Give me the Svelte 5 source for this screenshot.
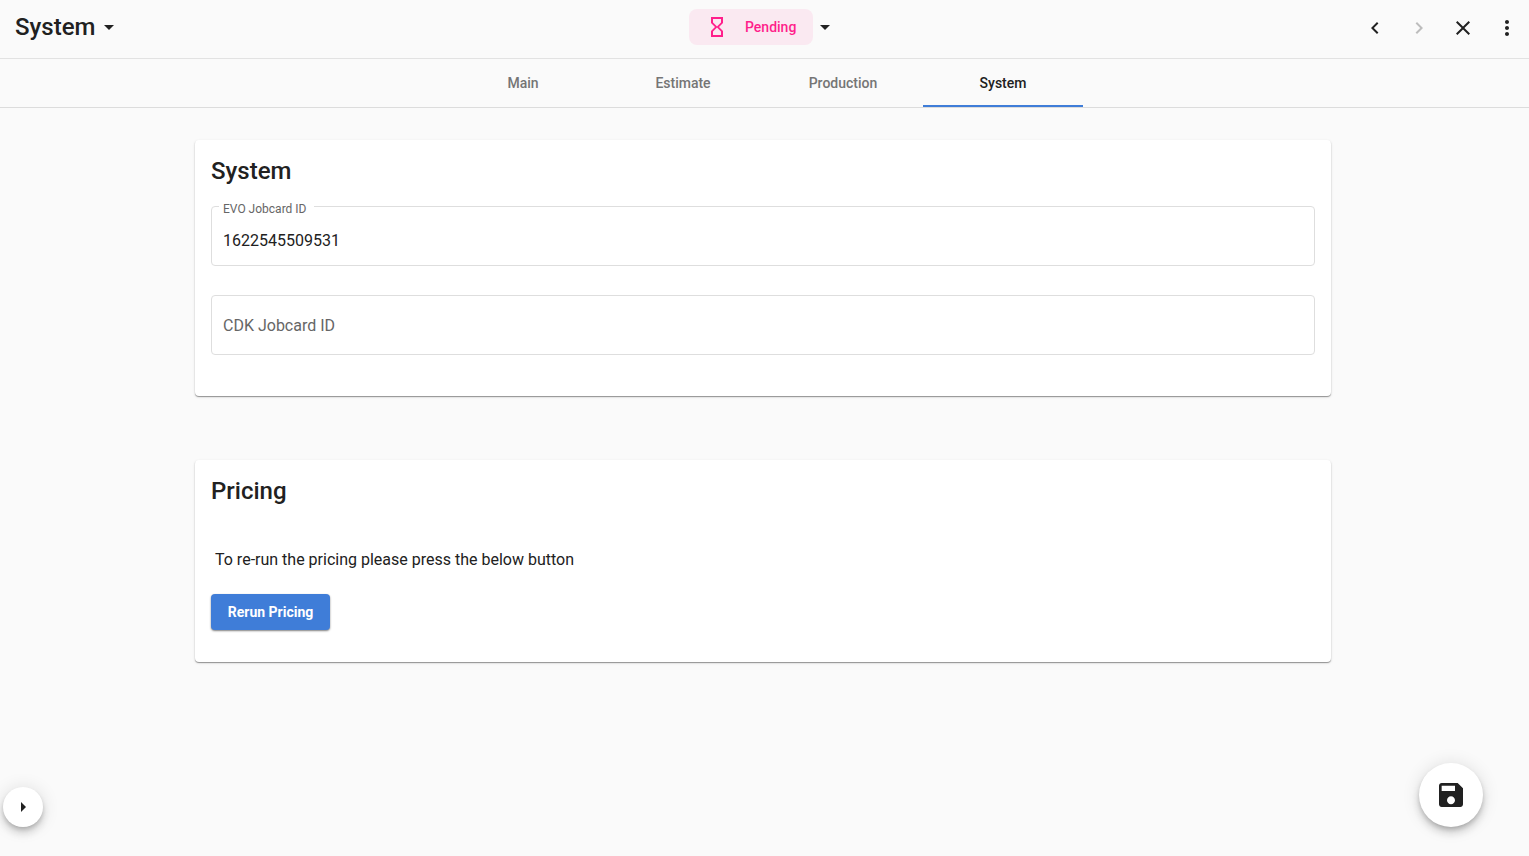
<script>
  const tabs = ['Main', 'Estimate', 'Production', 'System'];
  let active = $state('System');
  let evoId = $state('1622545509531');
  let cdkId = $state('');
</script>

<div class="page">
  <header class="toolbar">
    <button class="title">
      System
      <svg viewBox="0 0 24 24" aria-hidden="true"><path d="M7 10l5 5 5-5z" /></svg>
    </button>

    <div class="status">
      <button class="pill">
        <svg viewBox="0 0 24 24" aria-hidden="true"><path d="M6 2v6h.01L6 8.01 10 12l-4 4 .01.01H6V22h12v-5.99h-.01L18 16l-4-4 4-3.99-.01-.01H18V2H6zm10 14.5V20H8v-3.5l4-4 4 4zm-4-5l-4-4V4h8v3.5l-4 4z" /></svg>
        Pending
      </button>
      <button class="caret" aria-label="Change status">
        <svg viewBox="0 0 24 24"><path d="M7 10l5 5 5-5z" /></svg>
      </button>
    </div>

    <nav class="actions">
      <button aria-label="Previous"><svg viewBox="0 0 24 24"><path d="M15.41 7.41L14 6l-6 6 6 6 1.41-1.41L10.83 12z" /></svg></button>
      <button aria-label="Next" disabled><svg viewBox="0 0 24 24"><path d="M10 6L8.59 7.41 13.17 12l-4.58 4.59L10 18l6-6z" /></svg></button>
      <button aria-label="Close"><svg viewBox="0 0 24 24"><path d="M19 6.41L17.59 5 12 10.59 6.41 5 5 6.41 10.59 12 5 17.59 6.41 19 12 13.41 17.59 19 19 17.59 13.41 12z" /></svg></button>
      <button aria-label="More"><svg viewBox="0 0 24 24"><path d="M12 8c1.1 0 2-.9 2-2s-.9-2-2-2-2 .9-2 2 .9 2 2 2zm0 2c-1.1 0-2 .9-2 2s.9 2 2 2 2-.9 2-2-.9-2-2-2zm0 6c-1.1 0-2 .9-2 2s.9 2 2 2 2-.9 2-2-.9-2-2-2z" /></svg></button>
    </nav>
  </header>

  <div class="tabs" role="tablist">
    {#each tabs as tab}
      <button role="tab" aria-selected={active === tab} class:active={active === tab} onclick={() => (active = tab)}>{tab}</button>
    {/each}
  </div>

  <main>
    <section class="card fields">
      <h2>System</h2>
      <div class="field">
        <input id="evo" type="text" bind:value={evoId} />
        <label for="evo" class:floating={evoId}>EVO Jobcard ID</label>
      </div>
      <div class="field">
        <input id="cdk" type="text" bind:value={cdkId} />
        <label for="cdk" class:floating={cdkId}>CDK Jobcard ID</label>
      </div>
    </section>

    <section class="card pricing">
      <h2>Pricing</h2>
      <p>To re-run the pricing please press the below button</p>
      <button class="primary">Rerun Pricing</button>
    </section>
  </main>

  <button class="fab small" aria-label="Open panel">
    <svg viewBox="0 0 24 24"><path d="M10 17l5-5-5-5z" /></svg>
  </button>
  <button class="fab large" aria-label="Save">
    <svg viewBox="0 0 24 24"><path d="M17 3H5c-1.11 0-2 .9-2 2v14c0 1.1.89 2 2 2h14c1.1 0 2-.9 2-2V7l-4-4zm-5 16c-1.66 0-3-1.34-3-3s1.34-3 3-3 3 1.34 3 3-1.34 3-3 3zm3-10H5V5h10v4z" /></svg>
  </button>
</div>

<style>
  :global(body) {
    margin: 0;
    background: #fafafa;
  }

  .page {
    min-height: 100vh;
    color: #212121;
    font-family: Roboto, sans-serif;
    font-size: 16px;
  }

  button {
    padding: 0;
    border: 0;
    background: none;
    color: inherit;
    font: inherit;
    cursor: pointer;
  }

  svg {
    display: block;
    width: 24px;
    height: 24px;
    flex: none;
    fill: currentColor;
  }

  .toolbar {
    display: grid;
    grid-template-columns: 1fr auto 1fr;
    align-items: center;
    height: 58px;
    padding-right: 3px;
    border-bottom: 1px solid #e2e2e2;
  }

  .title {
    display: flex;
    align-items: center;
    justify-self: start;
    gap: 2px;
    height: 54px;
    margin-bottom: 4px;
    padding-left: 15px;
    font-size: 24px;
    font-weight: 500;
  }

  .status {
    display: flex;
    align-items: center;
    margin-bottom: 4px;
  }

  .pill {
    display: flex;
    align-items: center;
    gap: 16px;
    box-sizing: border-box;
    min-width: 124px;
    height: 36px;
    padding: 0 16px;
    border-radius: 8px;
    background: #fae9f1;
    color: #ff1f8b;
    font-size: 14px;
    font-weight: 500;
  }

  .actions {
    display: flex;
    justify-content: flex-end;
    gap: 4px;
    margin: 0 -1px 2px 0;
  }

  .actions button {
    display: grid;
    place-items: center;
    width: 40px;
    height: 40px;
  }

  .actions button:disabled {
    color: #bdbdbd;
  }

  .tabs {
    display: flex;
    justify-content: center;
    padding-right: 3px;
    border-bottom: 1px solid #dcdcdc;
  }

  .tabs button {
    box-sizing: border-box;
    width: 160px;
    height: 48px;
    padding-top: 2px;
    border-bottom: 2px solid transparent;
    color: #757575;
    font-size: 14px;
    font-weight: 500;
  }

  .tabs .active {
    border-color: #3f7dd8;
    color: #212121;
  }

  main {
    display: flex;
    flex-direction: column;
    gap: 64px;
    max-width: 1136px;
    margin: 0 auto;
    padding: 32px 35px 32px 32px;
  }

  .card {
    padding: 16px;
    border-radius: 4px;
    background: #fff;
    box-shadow: 0 1px 1px rgba(0, 0, 0, 0.36), 0 1px 3px rgba(0, 0, 0, 0.12);
  }

  h2 {
    margin: 0 0 20px;
    font-size: 24px;
    font-weight: 500;
    line-height: 30px;
  }

  .fields {
    padding-bottom: 41px;
  }

  .field {
    position: relative;
  }

  .field + .field {
    margin-top: 29px;
  }

  input {
    display: block;
    box-sizing: border-box;
    width: 100%;
    height: 60px;
    padding: 8px 11px 0;
    border: 1px solid #dedede;
    border-radius: 4px;
    background: transparent;
    color: #212121;
    font: inherit;
  }

  label {
    position: absolute;
    top: 20px;
    left: 8px;
    padding: 0 8px 0 4px;
    background: #fff;
    color: #666;
    line-height: 22px;
    pointer-events: none;
  }

  label.floating {
    top: -5px;
    font-size: 12px;
    line-height: 16px;
  }

  .pricing {
    padding-bottom: 32px;
  }

  p {
    margin: 42px 4px 22px;
    line-height: 24px;
  }

  .primary {
    min-width: 119px;
    height: 36px;
    padding: 0 16px;
    border-radius: 4px;
    background: #3f7dd8;
    box-shadow: 0 1px 2px rgba(0, 0, 0, 0.5);
    color: #fff;
    font-size: 14px;
    font-weight: 700;
  }

  .fab {
    position: fixed;
    bottom: 29px;
    display: grid;
    place-items: center;
    border-radius: 50%;
    background: #fff;
    box-shadow: 0 3px 5px -1px rgba(0, 0, 0, 0.2), 0 6px 10px rgba(0, 0, 0, 0.14), 0 1px 18px rgba(0, 0, 0, 0.12);
  }

  .small {
    left: 3px;
    width: 40px;
    height: 40px;
  }

  .large {
    right: 46px;
    width: 64px;
    height: 64px;
  }

  .large svg {
    width: 32px;
    height: 32px;
  }
</style>
